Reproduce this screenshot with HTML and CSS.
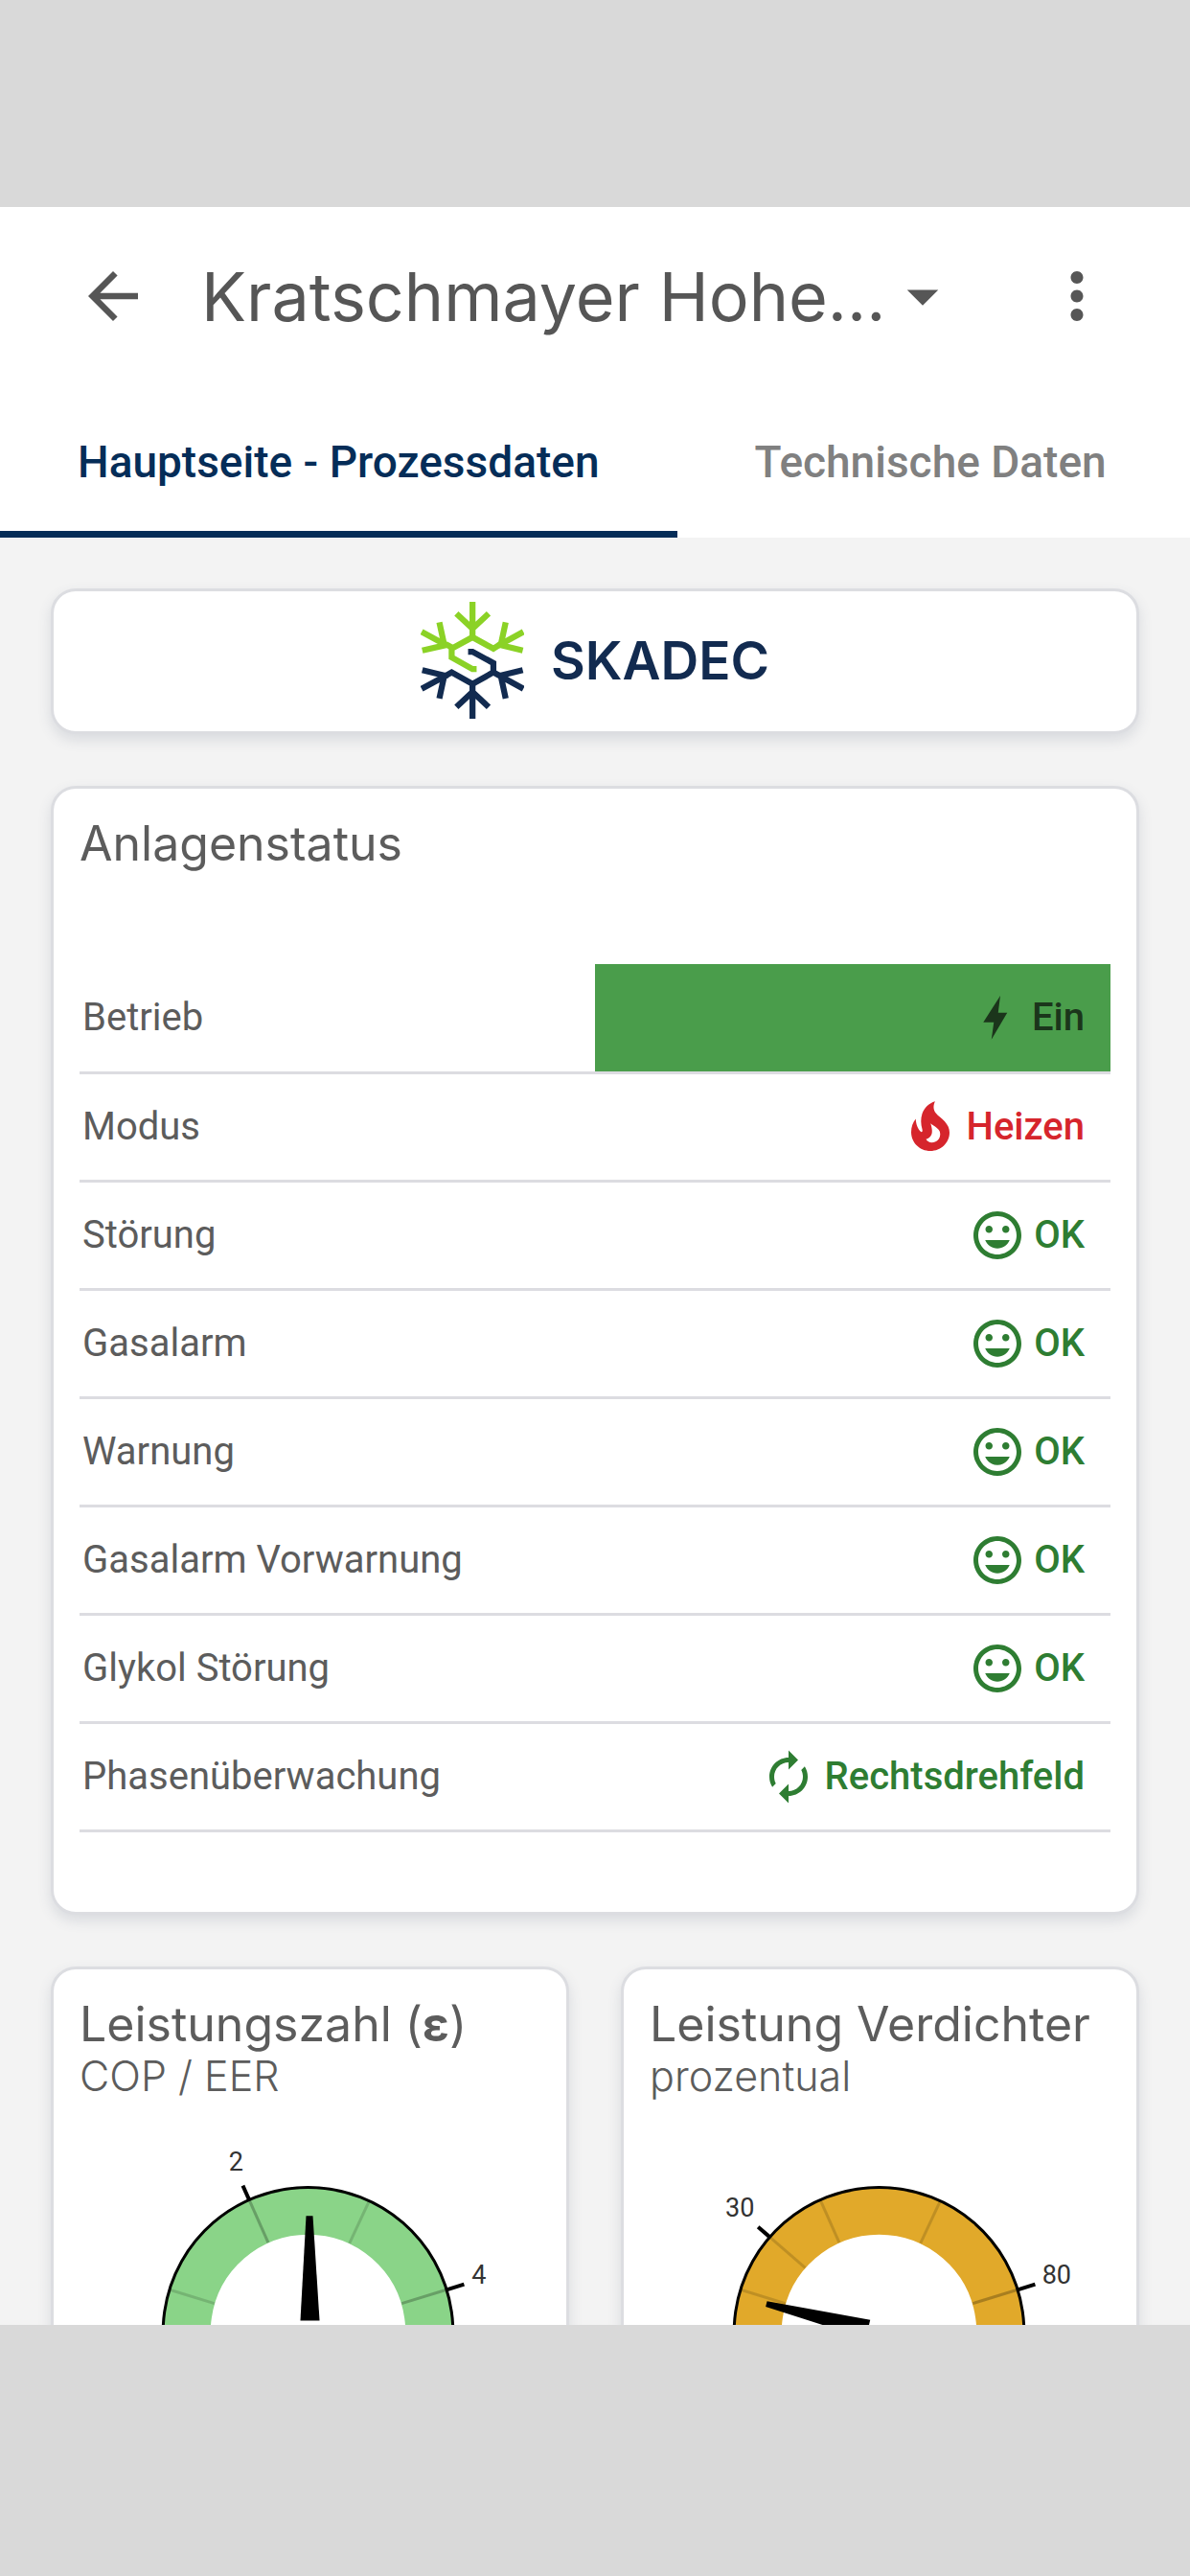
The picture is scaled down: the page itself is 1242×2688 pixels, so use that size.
FILE: index.html
```
<!DOCTYPE html>
<html lang="de">
<head>
    <meta charset="UTF-8">
    <meta name="viewport" content="width=device-width, initial-scale=1.0">
    <title>Kratschmayer Hohe...</title>
    <link rel="stylesheet" href="styles.css">
</head>
<body>
    <!-- icons used more than once -->
    <svg class="sprite" aria-hidden="true">
        <symbol id="mood" viewBox="0 0 24 24">
            <path d="M11.99 2C6.47 2 2 6.48 2 12s4.47 10 9.99 10C17.52 22 22 17.52 22 12S17.52 2 11.99 2zM12 20c-4.42 0-8-3.58-8-8s3.58-8 8-8 8 3.58 8 8-3.58 8-8 8zm3.5-9c.83 0 1.5-.67 1.5-1.5S16.33 8 15.5 8 14 8.67 14 9.5s.67 1.5 1.5 1.5zm-7 0c.83 0 1.5-.67 1.5-1.5S9.33 8 8.5 8 7 8.67 7 9.5 7.67 11 8.5 11zm3.5 6.5c2.33 0 4.31-1.46 5.11-3.5H6.89c.8 2.04 2.78 3.5 5.11 3.5z"/>
        </symbol>
    </svg>

    <div class="bar-top"></div>

    <header>
        <div class="appbar">
            <button class="icon-btn" aria-label="Zurück">
                <svg viewBox="0 0 24 24"><path d="M20 11H7.83l5.59-5.59L12 4l-8 8 8 8 1.41-1.41L7.83 13H20v-2z"/></svg>
            </button>
            <button class="title">
                <span>Kratschmayer Hohe...</span>
                <svg viewBox="0 0 24 24"><path d="M7 10l5 5 5-5z"/></svg>
            </button>
            <button class="icon-btn more" aria-label="Mehr">
                <svg viewBox="0 0 24 24"><path d="M12 8c1.1 0 2-.9 2-2s-.9-2-2-2-2 .9-2 2 .9 2 2 2zm0 2c-1.1 0-2 .9-2 2s.9 2 2 2 2-.9 2-2-.9-2-2-2zm0 6c-1.1 0-2 .9-2 2s.9 2 2 2 2-.9 2-2-.9-2-2-2z"/></svg>
            </button>
        </div>
        <nav class="tabs">
            <a href="#prozess" class="tab active">Hauptseite - Prozessdaten</a>
            <a href="#technik" class="tab">Technische Daten</a>
        </nav>
    </header>

    <main>
        <section class="card logo">
            <svg viewBox="118 80 325 370" aria-hidden="true">
                <g class="flake-green">
                    <path d="M281 80V192M230 117L281 165L332 117"/>
                    <path d="M372 212L347 228L281 192L215 228V256L281 293H294"/>
                    <path d="M120 175L198 217M176 145L191 214M122 234L200 216L215 224"/>
                    <path d="M442 175L362 219M386 145L371 214M440 234L362 215"/>
                </g>
                <g class="flake-navy">
                    <path d="M281 340V450M230 413L281 365L332 413"/>
                    <path d="M267 238H281L347 274V303L281 340L215 303L196 314"/>
                    <path d="M120 355L200 312M176 386L191 316M122 296L200 315"/>
                    <path d="M442 355L347 303M386 386L371 316M440 296L362 315"/>
                </g>
            </svg>
            <span>SKADEC</span>
        </section>

        <section class="card status">
            <h2>Anlagenstatus</h2>
            <table>
                <tr>
                    <th scope="row">Betrieb</th>
                    <td class="on"><div class="value">
                        <svg viewBox="0 0 24 24"><path d="M14 2.8L13.1 9.9H16.9L10.3 21.1L11.3 13.9H6.9z"/></svg>
                        Ein</div></td>
                </tr>
                <tr>
                    <th scope="row">Modus</th>
                    <td class="heat"><div class="value">
                        <svg viewBox="0 0 24 24"><path fill-rule="evenodd" d="M14 1.3C13.1 3 13.2 4.8 14.3 6.2C15.2 7.4 16.9 8.3 18.1 9.8C19.3 11.2 20 12.6 20 14.3C20 18.6 16.4 22 12 22S4 18.6 4 14.1C4 12 4.7 10.1 5.9 8.6C6 10.6 6.6 12.8 8.2 14.1C8.7 14.1 8.8 13.6 8.6 12.9C8 10.8 7.9 8.4 8.6 6.4C9.5 3.9 11.4 2.1 14 1.3zM12.1 10.5C12.7 12.4 13 14.2 12.4 15.3C12 16.2 11.3 16.8 10.2 17.1C10.7 18 11.6 18.5 12.6 18.5C14.6 18.5 16.1 17 16.1 15C16.1 13.5 15.4 13 14.6 12.3C13.8 11.6 12.9 11.2 12.1 10.5z"/></svg>
                        Heizen</div></td>
                </tr>
                <tr>
                    <th scope="row">Störung</th>
                    <td class="ok"><div class="value"><svg><use href="#mood"/></svg>OK</div></td>
                </tr>
                <tr>
                    <th scope="row">Gasalarm</th>
                    <td class="ok"><div class="value"><svg><use href="#mood"/></svg>OK</div></td>
                </tr>
                <tr>
                    <th scope="row">Warnung</th>
                    <td class="ok"><div class="value"><svg><use href="#mood"/></svg>OK</div></td>
                </tr>
                <tr>
                    <th scope="row">Gasalarm Vorwarnung</th>
                    <td class="ok"><div class="value"><svg><use href="#mood"/></svg>OK</div></td>
                </tr>
                <tr>
                    <th scope="row">Glykol Störung</th>
                    <td class="ok"><div class="value"><svg><use href="#mood"/></svg>OK</div></td>
                </tr>
                <tr>
                    <th scope="row">Phasenüberwachung</th>
                    <td class="ok"><div class="value">
                        <svg viewBox="0 0 24 24"><path d="M12 6v3l4-4-4-4v3c-4.42 0-8 3.58-8 8 0 1.57.46 3.03 1.24 4.26L6.7 14.8c-.45-.83-.7-1.79-.7-2.8 0-3.31 2.69-6 6-6zm6.76 1.74L17.3 9.2c.44.84.7 1.79.7 2.8 0 3.31-2.69 6-6 6v-3l-4 4 4 4v-3c4.42 0 8-3.58 8-8 0-1.57-.46-3.03-1.24-4.26z"/></svg>
                        Rechtsdrehfeld</div></td>
                </tr>
            </table>
        </section>

        <div class="gauges">
            <section class="card">
                <h2>Leistungszahl (<b>ε</b>)</h2>
                <p>COP / EER</p>
                <svg class="gauge" viewBox="0 0 480 480">
                    <g transform="translate(238 240)">
                        <path class="ring green" d="M-106 68A126 126 0 1 1 106 68"/>
                        <path class="outline" d="M-127 82A151 151 0 1 1 127 82"/>
                        <path class="sep" d="M0 -150V-102" transform="rotate(-73)"/>
                        <path class="sep dark" d="M0 -150V-102" transform="rotate(-24)"/>
                        <path class="sep" d="M0 -150V-102" transform="rotate(25)"/>
                        <path class="sep dark" d="M0 -150V-102" transform="rotate(73)"/>
                        <path class="tick" d="M0 -150V-167" transform="rotate(-24)"/>
                        <path class="tick" d="M0 -150V-170" transform="rotate(73)"/>
                        <text x="-75" y="-168">2</text>
                        <text x="178" y="-50">4</text>
                        <polygon points="-2,-121 5,-121 12,-12 -8,-12"/>
                    </g>
                </svg>
            </section>
            <section class="card">
                <h2>Leistung Verdichter</h2>
                <p>prozentual</p>
                <svg class="gauge" viewBox="0 0 480 480">
                    <g transform="translate(239 240)">
                        <path class="ring amber" d="M-106 68A126 126 0 1 1 106 68"/>
                        <path class="outline" d="M-127 82A151 151 0 1 1 127 82"/>
                        <path class="sep" d="M0 -150V-102" transform="rotate(-73)"/>
                        <path class="sep" d="M0 -150V-102" transform="rotate(-49)"/>
                        <path class="sep" d="M0 -150V-102" transform="rotate(-24)"/>
                        <path class="sep" d="M0 -150V-102" transform="rotate(25)"/>
                        <path class="sep dark" d="M0 -150V-102" transform="rotate(73)"/>
                        <path class="tick" d="M0 -150V-167" transform="rotate(-49)"/>
                        <path class="tick" d="M0 -150V-170" transform="rotate(73)"/>
                        <text x="-145" y="-120">30</text>
                        <text x="185" y="-50">80</text>
                        <polygon points="-3,-121 3,-121 10,-12 -10,-12" transform="rotate(-76)"/>
                    </g>
                </svg>
            </section>
        </div>
    </main>

    <div class="bar-bottom"></div>
</body>
</html>
```
FILE: styles.css
```
*{
    padding: 0;
    margin: 0;
    box-sizing: border-box;
}
body{
    height: 100vh;
    display: flex;
    flex-direction: column;
    font-family: Roboto, sans-serif;
    font-size: 40px;
    color: #5c5c5c;
    background: #f3f3f3;
}
button{
    border: 0;
    background: none;
    color: inherit;
    font: inherit;
    cursor: pointer;
}
svg{
    display: block;
    fill: currentColor;
}
.sprite{
    position: absolute;
    width: 0;
    height: 0;
}
.bar-top, .bar-bottom{
    flex: none;
    background: #d9d9d9;
}
.bar-top{
    height: 216px;
}
.bar-bottom{
    height: 262px;
}

/* app bar and tabs */
header{
    flex: none;
    background: #fff;
}
.appbar{
    display: flex;
    align-items: center;
    height: 186px;
    padding: 0 79px;
    color: #565656;
}
.appbar svg{
    width: 78px;
    height: 78px;
}
.title{
    display: flex;
    align-items: center;
    margin-left: 53px;
    font-family: Inter, sans-serif;
    font-size: 70px;
    white-space: nowrap;
}
.more{
    margin-left: auto;
}
.tabs{
    display: flex;
    height: 159px;
    overflow: hidden;
}
.tab{
    display: flex;
    align-items: center;
    padding: 0 81px;
    border-top: 7px solid transparent;
    border-bottom: 7px solid transparent;
    color: #808080;
    font-size: 46px;
    font-weight: 500;
    text-decoration: none;
    white-space: nowrap;
}
.tab.active{
    color: #052d58;
    border-bottom-color: #052d58;
}

/* cards */
main{
    flex: 1;
    min-height: 0;
    overflow: hidden;
    display: flex;
    flex-direction: column;
    gap: 54px;
    padding: 53px;
}
.card{
    flex: none;
    padding: 30px 27px;
    background: #fff;
    border: 3px solid #dcdde1;
    border-radius: 26px;
    box-shadow: 0 6px 14px rgba(70, 80, 110, 0.15);
}
.card h2{
    font-family: Inter, sans-serif;
    font-size: 50px;
    font-weight: 400;
    line-height: 54px;
    white-space: nowrap;
}
.card p{
    font-family: Inter, sans-serif;
    font-size: 43px;
    font-weight: 300;
    line-height: 54px;
}
.logo{
    display: flex;
    align-items: center;
    justify-content: center;
    gap: 28px;
    padding: 11px 12px 13px;
    color: #122b50;
    font-family: Inter, sans-serif;
    font-size: 55px;
    font-weight: 600;
    line-height: 60px;
}
.logo svg{
    width: 108px;
    height: 122px;
    fill: none;
    stroke-width: 19;
}
.flake-green{
    stroke: #8bd226;
}
.flake-navy{
    stroke: #122b50;
}

/* status table */
.status{
    padding-bottom: 83px;
}
.status table{
    width: 100%;
    margin-top: 99px;
    border-collapse: collapse;
    table-layout: fixed;
}
.status tr{
    height: 113px;
    border-bottom: 3px solid #dcdce1;
}
.status th{
    width: calc(50% + 5px);
    padding-left: 3px;
    font-weight: 400;
    text-align: left;
    white-space: nowrap;
}
.status td{
    padding-right: 27px;
    font-weight: 500;
}
.value{
    display: flex;
    align-items: center;
    justify-content: flex-end;
    gap: 8px;
}
.value svg{
    width: 60px;
    height: 60px;
}
.on{
    background: #4a9d4b;
    color: #1b351b;
}
.heat{
    color: #d6252c;
}
.ok{
    color: #2e7d32;
}

/* gauges */
.gauges{
    display: grid;
    grid-template-columns: 1fr 1fr;
    gap: 54px;
}
.gauge{
    width: 100%;
    color: #000;
    overflow: visible;
}
.gauge text{
    font-size: 27px;
    text-anchor: middle;
    fill: #333;
}
.ring{
    fill: none;
    stroke-width: 49;
}
.green{
    stroke: #8ad488;
}
.amber{
    stroke: #e1a92a;
}
.outline{
    fill: none;
    stroke: #000;
    stroke-width: 3;
}
.sep{
    stroke: rgba(0, 0, 0, 0.15);
    stroke-width: 3;
}
.sep.dark{
    stroke: rgba(0, 0, 0, 0.25);
}
.tick{
    stroke: #000;
    stroke-width: 4;
}
```
